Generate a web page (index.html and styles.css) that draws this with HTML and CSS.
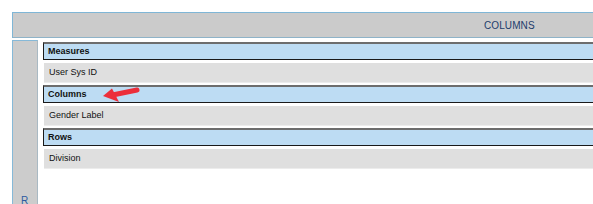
FILE: index.html
```html
<!DOCTYPE html>
<html>
<head>
<meta charset="utf-8">
<link rel="stylesheet" href="styles.css">
</head>
<body>
<div class="page">
  <div class="topbar"><span class="title">COLUMNS</span></div>
  <div class="main">
    <div class="side"><span class="side-label">R</span></div>
    <div class="content">
      <div class="section-head">Measures</div>
      <div class="item">User Sys ID</div>
      <div class="section-head">Columns</div>
      <div class="item">Gender Label</div>
      <div class="section-head">Rows</div>
      <div class="item">Division</div>
      <svg class="arrow" width="40" height="20" viewBox="0 0 40 20">
        <path d="M36 5 L14 9.5" stroke="#ec2f3b" stroke-width="5" stroke-linecap="round" fill="none"/>
        <path d="M2 11 L11 3.5 L18 17 Z" fill="#ec2f3b"/>
      </svg>
    </div>
  </div>
</div>
</body>
</html>
```

FILE: styles.css
```css
html, body {
  margin: 0;
  padding: 0;
  background: #ffffff;
  overflow: hidden;
}
body {
  width: 593px;
  height: 204px;
  font-family: "Liberation Sans", Arial, sans-serif;
  color: #111111;
}
.page {
  padding: 12px 0 0 12px;
  width: 620px;
}
.topbar {
  height: 24px;
  background: #cbcbcb;
  border-top: 1px solid #7fb6d6;
  border-left: 1px solid #7fb6d6;
  border-bottom: 1px solid #8fb3c8;
  display: flex;
  align-items: center;
  padding-left: 471px;
  box-sizing: content-box;
}
.title {
  font-size: 10px;
  color: #1d3d6b;
  letter-spacing: 0.1px;
}
.main {
  display: flex;
  margin-top: 2px;
  height: 170px;
}
.side {
  width: 24px;
  background: #cccccc;
  border-left: 1px solid #86b9d8;
  border-right: 1px solid #a9b9c3;
  border-top: 1px solid #86b9d8;
  position: relative;
  flex: none;
}
.side-label {
  position: absolute;
  left: 8px;
  top: 154px;
  font-size: 10px;
  color: #2b5aa0;
}
.content {
  margin-left: 5px;
  padding-top: 2px;
  flex: 1;
  position: relative;
}
.section-head {
  height: 15px;
  line-height: 15px;
  background: #bddcf3;
  border-top: 2px solid #6d6d6d;
  border-left: 1px solid #1a1a1a;
  border-bottom: 1px solid #1a1a1a;
  font-weight: bold;
  font-size: 9px;
  padding-left: 4px;
  margin-bottom: 3px;
}
.item {
  height: 19px;
  line-height: 19px;
  background: #dfdfdf;
  border-bottom: 1px solid #ececec;
  font-size: 9px;
  padding-left: 5px;
  margin-bottom: 2px;
  margin-left: 1px;
}
.arrow {
  position: absolute;
  left: 58px;
  top: 45px;
}
```
